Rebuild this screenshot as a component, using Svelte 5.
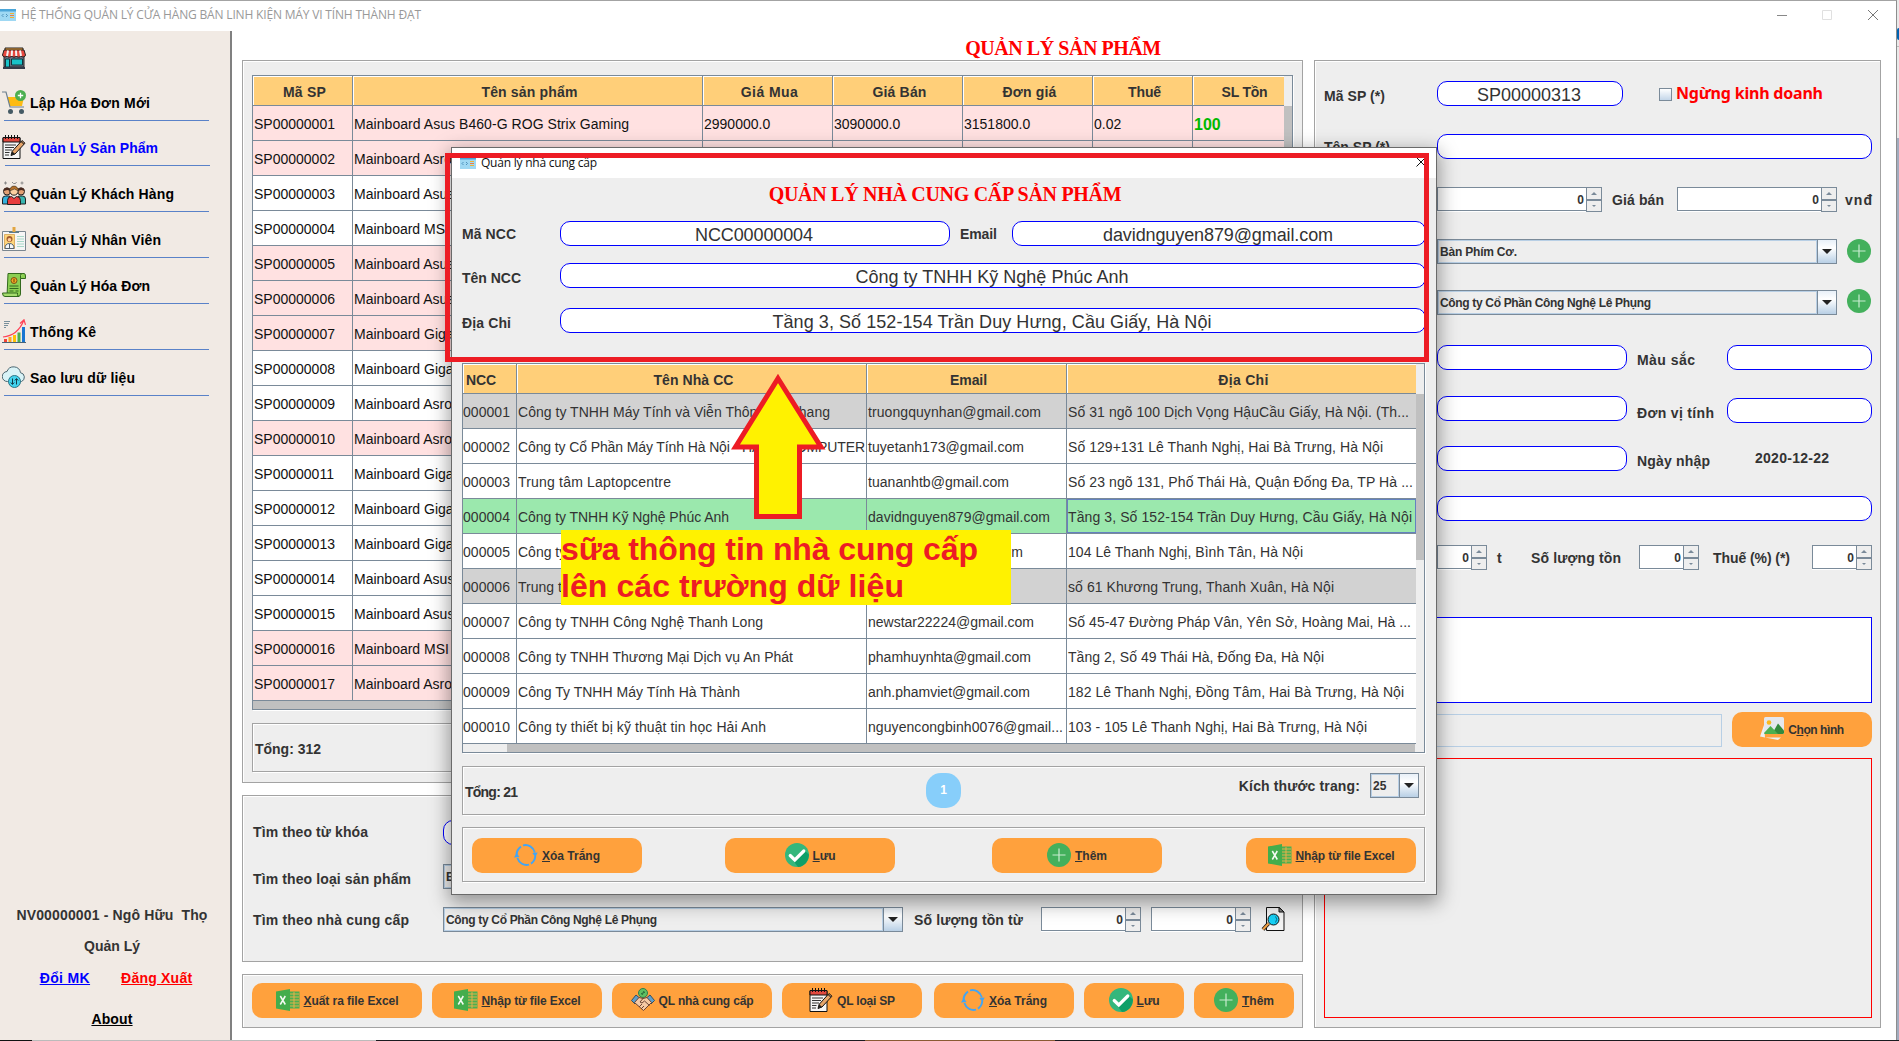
<script>
  // Adjusts letter spacing so that a label takes the given number of pixels.
  function fit(node, width) {
    if (!width) return;
    const count = [...node.textContent].length - 1;
    const natural = node.getBoundingClientRect().width;
    if (count > 0) node.style.letterSpacing = `${(width - natural) / count}px`;
  }

  const menu = [
    { icon: 'cart', text: 'Lập Hóa Đơn Mới', w: 120 },
    { icon: 'note', text: 'Quản Lý Sản Phẩm', w: 128, active: true },
    { icon: 'people', text: 'Quản Lý Khách Hàng', w: 144 },
    { icon: 'badge', text: 'Quản Lý Nhân Viên', w: 131 },
    { icon: 'bill', text: 'Quản Lý Hóa Đơn', w: 120 },
    { icon: 'chart', text: 'Thống Kê', w: 66 },
    { icon: 'cloud', text: 'Sao lưu dữ liệu', w: 105 }
  ];

  const productHeads = [
    ['Mã SP', 43], ['Tên sản phẩm', 96], ['Giá Mua', 57], ['Giá Bán', 54],
    ['Đơn giá', 54], ['Thuế', 33], ['SL Tồn', 46]
  ];
  const pink = [1, 2, 5, 6, 7, 10, 16, 17];
  const names = [
    'Mainboard Asus B460-G ROG Strix Gaming', 'Mainboard Asrock', 'Mainboard Asus', 'Mainboard MSI',
    'Mainboard Asus', 'Mainboard Asus', 'Mainboard Gigabyte', 'Mainboard Gigabyte', 'Mainboard Asrock',
    'Mainboard Asrock', 'Mainboard Gigabyte', 'Mainboard Gigabyte', 'Mainboard Gigabyte', 'Mainboard Asus',
    'Mainboard Asus', 'Mainboard MSI', 'Mainboard Asrock'
  ];
  const products = names.map((name, i) => ({
    id: 'SP' + String(i + 1).padStart(8, '0'),
    name,
    first: i === 0,
    pink: pink.includes(i + 1)
  }));

  const supplierHeads = [['NCC', 30], ['Tên Nhà CC', 80], ['Email', 37], ['Địa Chỉ', 50]];
  const suppliers = [
    { id: '000001', name: 'Công ty TNHH Máy Tính và Viễn Thông An Khang', nw: 312, mail: 'truongquynhan@gmail.com', mw: 173, addr: 'Số 31 ngõ 100 Dịch Vọng HậuCầu Giấy, Hà Nội. (Th...', aw: 341, tone: 'gray' },
    { id: '000002', name: 'Công ty Cổ Phần Máy Tính Hà Nội - HANOICOMPUTER', nw: 347, mail: 'tuyetanh173@gmail.com', mw: 156, addr: 'Số 129+131 Lê Thanh Nghị, Hai Bà Trưng, Hà Nội', aw: 315 },
    { id: '000003', name: 'Trung tâm Laptopcentre', nw: 153, mail: 'tuananhtb@gmail.com', mw: 141, addr: 'Số 23 ngõ 131, Phố Thái Hà, Quận Đống Đa, TP Hà ...', aw: 345 },
    { id: '000004', name: 'Công ty TNHH Kỹ Nghệ Phúc Anh', nw: 211, mail: 'davidnguyen879@gmail.com', mw: 182, addr: 'Tầng 3, Số 152-154 Trần Duy Hưng, Cầu Giấy, Hà Nội', aw: 344, tone: 'green' },
    { id: '000005', name: 'Công ty', nw: 0, mail: 'benhvientin@gmail.com', mw: 155, addr: '104 Lê Thanh Nghị, Bình Tân, Hà Nội', aw: 235 },
    { id: '000006', name: 'Trung tâm', nw: 0, mail: '', mw: 0, addr: 'số 61 Khương Trung, Thanh Xuân, Hà Nội', aw: 266, tone: 'gray' },
    { id: '000007', name: 'Công ty TNHH Công Nghệ Thanh Long', nw: 245, mail: 'newstar22224@gmail.com', mw: 166, addr: 'Số 45-47 Đường Pháp Vân, Yên Sở, Hoàng Mai, Hà ...', aw: 343 },
    { id: '000008', name: 'Công ty TNHH Thương Mại Dịch vụ An Phát', nw: 275, mail: 'phamhuynhta@gmail.com', mw: 163, addr: 'Tầng 2, Số 49 Thái Hà, Đống Đa, Hà Nội', aw: 256 },
    { id: '000009', name: 'Công Ty TNHH Máy Tính Hà Thành', nw: 222, mail: 'anh.phamviet@gmail.com', mw: 162, addr: '182 Lê Thanh Nghị, Đồng Tâm, Hai Bà Trưng, Hà Nội', aw: 336 },
    { id: '000010', name: 'Công ty thiết bị kỹ thuật tin học Hải Anh', nw: 248, mail: 'nguyencongbinh0076@gmail...', mw: 195, addr: '103 - 105 Lê Thanh Nghị, Hai Bà Trưng, Hà Nội', aw: 299 }
  ];
</script>

{#snippet icon(name)}
  <svg class="ico" viewBox="0 0 24 24" width="24" height="24">
    {#if name === 'store'}
      <path d="M3 2h18v4H3z" fill="#f5a33a" stroke="#222" />
      <path d="M2 10v11h20V10z" fill="#6b7284" stroke="#222" />
      <path d="M2 4h20l1.500 5a2.500 2 0 0 1-4.600 1 2.500 2 0 0 1-4.600 0 2.500 2 0 0 1-4.600 0 2.500 2 0 0 1-4.600 0A2.500 2 0 0 1 .5 9z" fill="#e8483f" stroke="#222" />
      <path d="M6 4.500L5 10M10 4.500L9.700 10M14 4.500l.3 5.500M18 4.500l1 5.500" stroke="#f3f3f3" stroke-width="2" />
      <path d="M3.500 13h4v8h-4zM9.500 13h11v6h-11z" fill="#18c3c9" stroke="#11343c" />
      <path d="M1 22h22" stroke="#333a48" stroke-width="2" />
    {:else if name === 'cart'}
      <path d="M5 7h17l-2 9H8z" fill="#fdbb13" />
      <path d="M0 2h4l4 15h14" fill="none" stroke="#6d7f8d" stroke-width="1.200" />
      <circle cx="8.500" cy="21.500" r="2.500" fill="#455a64" /><circle cx="19.500" cy="21.500" r="2.500" fill="#455a64" />
      <circle cx="18.500" cy="5.500" r="5.500" fill="#4caf50" />
      <path d="M18.500 2.800v5.400M15.800 5.500h5.400" stroke="#fff" stroke-width="1.300" />
    {:else if name === 'note'}
      <path d="M1 3h17v20.500H1z" fill="#f5f5f5" stroke="#111" />
      <path d="M1 2.500h17V7H1z" fill="#e0483f" stroke="#111" />
      <path d="M3.500 0v4M6.500 0v4M9.500 0v4M12.500 0v4M15.500 0v4" stroke="#111" />
      <path d="M3 10h11M3 12.500h9M3 15h7M3 17.500h4.500M3 20h4" stroke="#333" />
      <path d="M9 20.500l1.200-4.200L20 5.500l3 2.700-10 10.800z" fill="#e6a56a" stroke="#111" />
      <path d="M9 20.500l1.200-4.200 2.800 2.700z" fill="#222" /><path d="M19 6.500l3 2.800" stroke="#111" />
    {:else if name === 'people'}
      <path d="M2 2h3M3.500.5v3M18.500 2h3M20 .5v3M10 1l1.500 1.500h2L14.500 1" stroke="#888" fill="none" />
      <circle cx="5" cy="10.500" r="3.500" fill="#e5a073" stroke="#222" /><path d="M1.500 10a3.500 3.500 0 0 1 7 0l-3-1z" fill="#4b2a1e" />
      <circle cx="19" cy="10.500" r="3.500" fill="#e5a073" stroke="#222" /><path d="M15.500 10a3.500 3.500 0 0 1 7 0l-3-1z" fill="#4b2a1e" />
      <path d="M.5 23v-5q0-3 3-3h4v8z" fill="#35b0dc" stroke="#222" /><path d="M23.500 23v-5q0-3-3-3h-4v8z" fill="#39b6b0" stroke="#222" />
      <circle cx="12" cy="10" r="4.200" fill="#fbd0a0" stroke="#222" /><path d="M7.500 10a4.500 5 0 0 1 9 0l-4-2z" fill="#b4712b" stroke="#222" stroke-width=".5" />
      <path d="M5.500 23.500v-4q0-4 4-4l2.500 2 2.500-2q4 0 4 4v4z" fill="#e83d3d" stroke="#222" />
    {:else if name === 'badge'}
      <path d="M.5 4.500h23v19H.5z" fill="#f6f6f6" stroke="#7b8790" />
      <path d="M7 4h10v2H7z" fill="#607d8b" /><path d="M10.500 0h3v5h-3z" fill="#e2a642" />
      <path d="M2.500 7.500h10v14h-10z" fill="#ffd67c" stroke="#c98a2b" stroke-width=".6" />
      <circle cx="7.500" cy="12" r="3" fill="#a45d30" /><circle cx="7.500" cy="12.700" r="1.800" fill="#ffcf9d" />
      <path d="M3 21.500q0-5 4.500-5t4.500 5z" fill="#f4f7fa" stroke="#54616e" /><path d="M7.500 17v4" stroke="#54616e" />
      <path d="M15 9.500h7M15 12h7M15 14.500h7M15 17h7M15 19.500h7" stroke="#a8d8c8" />
    {:else if name === 'bill'}
      <path d="M6 .5h16q1.500 0 1.500 2.500v2.500h-5V21q0 2.500-2.500 2.500H5z" fill="#8bcf52" stroke="#33691e" />
      <path d="M.5 20h15v1.500q0 2 1.500 2H3q-2.500 0-2.500-3.500zM18.500 5.500V2.500Q18.500.5 20.500.5" fill="#a5dc6e" stroke="#33691e" />
      <circle cx="12" cy="7.500" r="3" fill="#f3a825" stroke="#7a5316" /><path d="M12 5.800v3.400" stroke="#6b3f00" />
      <path d="M7.500 13h9M7.500 15.500h9M7.500 18h4M13.500 18h3" stroke="#33691e" />
    {:else if name === 'chart'}
      <path d="M0 23.500h24" stroke="#4a6377" />
      <path d="M2 20h3v3H2z" fill="#f44336" /><path d="M6.500 18h3v5h-3z" fill="#ffa726" /><path d="M11 16h3v7h-3z" fill="#ffc107" />
      <path d="M15.500 13.500h3V23h-3z" fill="#4caf50" /><path d="M20 8h3v15h-3z" fill="#1976d2" />
      <path d="M1 18C12 17 18 11 22 1M18 4.500L22 .8l1.500 5" fill="none" stroke="#ff4054" stroke-width="1.200" />
      <path d="M2 2.500h6M2 4.500h5M2 6.500h4M2 8.500h2" stroke="#78909c" />
    {:else if name === 'cloud'}
      <path d="M5.500 16.500a5 5 0 0 1-.5-10 7 7 0 0 1 13.500 1.200 4.600 4.600 0 0 1 1 8.800z" fill="#d9f3f7" stroke="#4c6670" />
      <circle cx="12.500" cy="16.500" r="6" fill="#41d3ee" stroke="#2c7586" />
      <path d="M10.500 13.500v5.500M8.800 17.500l1.700 2 1.700-2M14.500 19.500V14M12.800 15.500l1.700-2 1.700 2" fill="none" stroke="#123c4a" />
    {:else if name === 'excel'}
      <path d="M13 3.500h10.500v17H13z" fill="#4caf50" />
      <path d="M14 6h9M14 9h9M14 12h9M14 15h9M14 18h9M18 4v16" stroke="#f0b04b" stroke-width=".9" />
      <path d="M0 3.500L14 1v22L0 20.500z" fill="#43ad4c" />
      <path d="M4.300 8l5 8.500M9.300 8l-5 8.500" stroke="#f4fbf4" stroke-width="1.500" />
    {:else if name === 'refresh'}
      <path d="M2.600 12.500A9.600 10 0 0 1 7 3.600M9 2.400A9.600 10 0 0 1 20.800 9.500M21.300 13A9.600 10 0 0 1 17 20.600M15 21.600A9.600 10 0 0 1 3.400 15" fill="none" stroke="#42a5f5" stroke-width="1.900" />
      <path d="M0 14.500l2.600-4.500L5.500 14zM18.300 10l5.400-.5-2.300 4.500z" fill="#42a5f5" />
    {:else if name === 'check'}
      <circle cx="12" cy="12" r="12" fill="#34b77c" />
      <path d="M20 8l3.900 3.500A12 12 0 0 1 13 24l-4.500-6z" fill="#0f9f68" />
      <path d="M5.200 12.500l4.600 4.500 9-9" fill="none" stroke="#fff" stroke-width="3.200" stroke-linecap="round" />
    {:else if name === 'plus'}
      <circle cx="12" cy="12" r="12" fill="#43b05c" />
      <path d="M12 5.500v13M5.500 12h13" stroke="#c8ecd0" stroke-width="1.200" />
    {:else if name === 'hands'}
      <circle cx="12" cy="5" r="4.500" fill="#5fbf62" stroke="#2e7d4f" /><path d="M10 5.500q2 2 2-.5t2-.5" stroke="#1c5a33" fill="none" />
      <path d="M.5 12.500L5 7l3.500 3-4.500 6z" fill="#5e9ecb" stroke="#37505e" /><path d="M23.500 12.500L19 7l-3.500 3 4.500 6z" fill="#5e9ecb" stroke="#37505e" />
      <path d="M3.500 14.500L8 9.500l4 1 4-1 4.500 5-8 8z" fill="#f6c9a4" stroke="#6d4433" />
      <path d="M12 10.500l-3 3.500 2 1 2.500-2 5 4.500M8 19l3-3M10 21l3-3" fill="none" stroke="#6d4433" />
    {:else if name === 'picture'}
      <path d="M4 8L0 19.500 18 23l3-2.500H5z" fill="#eceff1" />
      <rect x="4" y="0" width="20" height="17" rx="1.500" fill="#e4e7ee" />
      <circle cx="9" cy="5.500" r="2.300" fill="#fbb91c" />
      <path d="M12 17l6-10.500 6 7V15.500q0 1.500-1.500 1.500z" fill="#338a3e" /><path d="M4 16l6.500-7 7.500 8H5q-1 0-1-1z" fill="#4caf50" />
    {:else if name === 'search'}
      <path d="M5.500.500h13L23 5v18.500H5.500z" fill="#f3f3f3" stroke="#111" /><path d="M18 .5V5h5z" fill="#888" stroke="#111" />
      <path d="M2 22.500l5.500-6" stroke="#111" stroke-width="3.800" /><path d="M2 22.500l5.500-6" stroke="#f0a045" stroke-width="2.200" />
      <circle cx="12.500" cy="12.500" r="5.500" fill="#16d0f5" stroke="#111" /><path d="M14.500 9.500q2.500 2.500 0 6" fill="none" stroke="#0b6d8f" />
    {/if}
  </svg>
{/snippet}

{#snippet appIcon()}
  <svg class="app-ico" viewBox="0 0 16 12" width="16" height="12">
    <path d="M0 0h16v12H0z" fill="#9fd8f3" /><path d="M0 0h16v2.500H0z" fill="#4aa5d8" />
    <path d="M3.500 5L2 6.500 3.500 8M6 5l1.500 1.500L6 8" fill="none" stroke="#3c82ad" stroke-width=".8" />
    <path d="M10 4.500h4M10 8.500h4" stroke="#f2b233" /><path d="M10 6.500h4" stroke="#e98048" />
  </svg>
{/snippet}

{#snippet button(name, before, key, after, w, size)}
  <button class="btn {size}">
    {@render icon(name)}<span use:fit={w}>{before}<u>{key}</u>{after}</span>
  </button>
{/snippet}

{#snippet combo(text, w, size)}
  <div class="combo {size}">
    <div class="value"><span use:fit={w}>{text}</span></div>
    <div class="arrow"><i></i></div>
  </div>
{/snippet}

{#snippet spinner(size)}
  <div class="spinner {size}">
    <div class="num">0</div>
    <div class="steps"><span><i class="up"></i></span><span><i class="down"></i></span></div>
  </div>
{/snippet}

{#snippet label(text, w, cls)}
  <div class="label {cls}"><span use:fit={w}>{text}</span></div>
{/snippet}

{#snippet field(text, w, size)}
  <div class="field {size}"><span use:fit={w}>{text}</span></div>
{/snippet}

<div class="screen">
  <div class="window">
    <header class="titlebar">
      {@render appIcon()}
      <span class="title" use:fit={400}>HỆ THỐNG QUẢN LÝ CỬA HÀNG BÁN LINH KIỆN MÁY VI TÍNH THÀNH ĐẠT</span>
      <svg class="controls" viewBox="0 0 102 12" width="102" height="12">
        <path d="M0 6.500h10" stroke="#888" /><path d="M45.500 1.500h9v9h-9z" fill="none" stroke="#e0e0e0" />
        <path d="M91 1l10 10M101 1L91 11" stroke="#777" />
      </svg>
    </header>

    <div class="body">
      <nav class="sidebar">
        <div class="store">{@render icon('store')}</div>
        {#each menu as item}
          <div class="item" class:active={item.active}>
            {@render icon(item.icon)}<span use:fit={item.w}>{item.text}</span>
          </div>
        {/each}
        <footer class="user">
          <div><span use:fit={191}>NV00000001 - Ngô Hữu&nbsp; Thọ</span></div>
          <div class="role"><span use:fit={56}>Quản Lý</span></div>
          <div class="links"><a class="blue" href="#pw" use:fit={50}>Đổi MK</a><a class="red" href="#out" use:fit={71}>Đăng Xuất</a></div>
          <div class="about"><a href="#about" use:fit={41}>About</a></div>
        </footer>
      </nav>

      <main>
        <h1><span use:fit={196}>QUẢN LÝ SẢN PHẨM</span></h1>
        <div class="panels">
          <div class="left">
            <section class="group list">
              <div class="table products">
                <div class="grid">
                  <div class="tr head">
                    {#each productHeads as [text, w]}<div class="th"><span use:fit={w}>{text}</span></div>{/each}
                  </div>
                  {#each products as p}
                    <div class="tr" class:pink={p.pink}>
                      <div class="td">{p.id}</div>
                      <div class="td"><span use:fit={p.first ? 275 : 0}>{p.name}</span></div>
                      <div class="td">{p.first ? '2990000.0' : ''}</div>
                      <div class="td">{p.first ? '3090000.0' : ''}</div>
                      <div class="td">{p.first ? '3151800.0' : ''}</div>
                      <div class="td">{p.first ? '0.02' : ''}</div>
                      <div class="td stock">{p.first ? '100' : ''}</div>
                    </div>
                  {/each}
                </div>
                <div class="vbar"><i></i></div>
                <div class="hbar"><i></i></div>
              </div>
              <div class="group total"><span use:fit={66}>Tổng: 312</span></div>
            </section>

            <section class="group filters">
              <div class="line">{@render label('Tìm theo từ khóa', 115, 'f')}{@render field('', 0, 'w460')}</div>
              <div class="line">{@render label('Tìm theo loại sản phẩm', 158, 'f d3')}{@render combo('Bàn Phím Cơ.', 77, 'w460')}</div>
              <div class="line">
                {@render label('Tìm theo nhà cung cấp', 156, 'f d1')}{@render combo('Công ty Cổ Phần Công Nghệ Lê Phụng', 211, 'w460')}
                {@render label('Số lượng tồn từ', 109, 'stockfrom d1')}{@render spinner('w100')}{@render spinner('w100 gap10')}
                <div class="find">{@render icon('search')}</div>
              </div>
            </section>

            <section class="group actions">
              {@render button('excel', '', 'X', 'uất ra file Excel', 95, 'b170')}
              {@render button('excel', '', 'N', 'hập từ file Excel', 99, 'b170')}
              {@render button('hands', 'QL nhà cung cấp', '', '', 95, 'b160')}
              {@render button('note', 'QL loại SP', '', '', 58, 'b140')}
              {@render button('refresh', '', 'X', 'óa Trắng', 58, 'b140 shift')}
              {@render button('check', '', 'L', 'ưu', 23, 'b100')}
              {@render button('plus', '', 'T', 'hêm', 32, 'b100')}
            </section>
          </div>

          <section class="group detail">
            <div class="line">
              {@render label('Mã SP (*)', 61, 'c d3')}{@render field('SP00000313', 104, 'w186')}
              <div class="check"><i></i><span use:fit={147}>Ngừng kinh doanh</span></div>
            </div>
            <div class="line">{@render label('Tên SP (*)', 66, 'c d1')}{@render field('', 0, 'w435')}</div>
            <div class="line">
              {@render label('Giá mua', 0, 'c d1')}{@render spinner('w165')}{@render label('Giá bán', 52, 'sale d1')}{@render spinner('w160')}
              {@render label('vnđ', 27, 'unit d1')}
            </div>
            <div class="line">{@render label('', 0, 'c')}{@render combo('Bàn Phím Cơ.', 77, 'w400')}<div class="add">{@render icon('plus')}</div></div>
            <div class="line">{@render label('', 0, 'c')}{@render combo('Công ty Cổ Phần Công Nghệ Lê Phụng', 211, 'w400')}<div class="add up1">{@render icon('plus')}</div></div>
            <div class="line">{@render label('', 0, 'c')}{@render field('', 0, 'w190')}{@render label('Màu sắc', 58, 'mid d3')}{@render field('', 0, 'w145')}</div>
            <div class="line">{@render label('', 0, 'c')}{@render field('', 0, 'w190')}{@render label('Đơn vị tính', 77, 'mid d5')}{@render field('', 0, 'w145 low')}</div>
            <div class="line">{@render label('', 0, 'c')}{@render field('', 0, 'w190')}{@render label('Ngày nhập', 73, 'mid d3')}{@render label('2020-12-22', 74, 'date')}</div>
            <div class="line">{@render label('', 0, 'c')}{@render field('', 0, 'w435')}</div>
            <div class="line">
              {@render label('', 0, 'c')}{@render spinner('w50')}{@render label('t', 0, 't d1')}{@render label('Số lượng tồn', 90, 'qty d1')}
              {@render spinner('w60')}{@render label('Thuế (%) (*)', 77, 'tax d1')}{@render spinner('w60')}
            </div>
            <div class="memo"></div>
            <div class="file"><div class="path"></div>{@render button('picture', 'C', 'h', 'ọn hình', 56, 'b140')}</div>
            <div class="preview"></div>
          </section>
        </div>
      </main>
    </div>
  </div>
  <div class="behind"><i></i><b></b></div>
  <div class="taskbar"></div>

  <div class="dialog">
    <header>
      {@render appIcon()}<span use:fit={116}>Quản lý nhà cung cấp</span>
      <svg class="close" viewBox="0 0 10 10" width="10" height="10"><path d="M.5.5l9 9M9.500.5l-9 9" stroke="#111" /></svg>
    </header>
    <h2><span use:fit={353}>QUẢN LÝ NHÀ CUNG CẤP SẢN PHẨM</span></h2>
    <div class="form">
      <div class="line">
        {@render label('Mã NCC', 54, 's d1')}{@render field('NCC00000004', 118, 'w390')}
        {@render label('Email', 37, 'mail d1')}{@render field('davidnguyen879@gmail.com', 230, 'w414')}
      </div>
      <div class="line">{@render label('Tên NCC', 59, 's d3')}{@render field('Công ty TNHH Kỹ Nghệ Phúc Anh', 273, 'w866')}</div>
      <div class="line">{@render label('Địa Chỉ', 49, 's d3')}{@render field('Tầng 3, Số 152-154 Trần Duy Hưng, Cầu Giấy, Hà Nội', 439, 'w866')}</div>
    </div>

    <div class="table suppliers">
      <div class="grid">
        <div class="tr head">
          {#each supplierHeads as [text, w]}<div class="th"><span use:fit={w}>{text}</span></div>{/each}
        </div>
        {#each suppliers as s}
          <div class="tr {s.tone ?? ''}">
            <div class="td"><span use:fit={47}>{s.id}</span></div>
            <div class="td"><span use:fit={s.nw}>{s.name}</span></div>
            <div class="td"><span use:fit={s.mw}>{s.mail}</span></div>
            <div class="td" class:focus={s.tone === 'green'}><span use:fit={s.aw}>{s.addr}</span></div>
          </div>
        {/each}
      </div>
      <div class="vbar"><i></i></div>
      <div class="hbar"><i></i></div>
    </div>

    <div class="group pager">
      <span class="sum" use:fit={53}>Tổng: 21</span>
      <div class="page">1</div>
      <div class="size">{@render label('Kích thước trang:', 121, 'd1')}{@render combo('25', 0, 'w49')}</div>
    </div>
    <div class="group foot">
      {@render button('refresh', '', 'X', 'óa Trắng', 58, 'b170')}
      {@render button('check', '', 'L', 'ưu', 23, 'b170')}
      {@render button('plus', '', 'T', 'hêm', 32, 'b170')}
      {@render button('excel', '', 'N', 'hập từ file Excel', 99, 'b170')}
    </div>
  </div>

  <div class="marker"></div>
  <svg class="pointer" viewBox="0 0 100 150" width="100" height="150">
    <path d="M48 8.500L91 77H69.500V146.500H26.500V77H5.500z" fill="#fff200" stroke="#ed1c24" stroke-width="5" />
  </svg>
  <div class="caption"><span use:fit={417}>sữa thông tin nhà cung cấp</span><br /><span use:fit={343}>lên các trường dữ liệu</span></div>
</div>

<style>
  :global(body) { margin: 0; overflow: hidden; background: #fff; }
  .screen, .screen * { box-sizing: border-box; }
  .screen {
    position: relative; width: 1899px; height: 1041px; overflow: hidden;
    font: 14px 'Liberation Sans', Arial, sans-serif; color: #333; white-space: nowrap;
    display: grid; grid-template: 1040px 1px / 1897px 2px;
  }
  span, a { display: inline-block; }
  svg { display: block; flex: none; }
  i { display: block; }

  .window { display: flex; flex-direction: column; border-top: 1px solid #a3a3a3; border-right: 1px solid #8d8d8d; background: #fff; }
  .titlebar { height: 30px; display: flex; align-items: center; padding-bottom: 2px; font: 12px 'Open Sans', 'Noto Sans', sans-serif; color: #999; }
  .titlebar .title { margin: -1px 0 0 5px; }
  .app-ico { align-self: flex-start; margin-top: 8px; }
  .controls { margin: -1px 17px 0 auto; }
  .behind { background: linear-gradient(#e9e9e9 138px, #a2acbf 138px); padding-top: 28px; }
  .behind i { height: 12px; background: #0063b1; border-radius: 2px 0 0 2px; }
  .behind b { display: block; height: 1px; margin-top: 6px; background: #bbb; }
  .taskbar { grid-column: 1 / 3; background: linear-gradient(90deg, #111 32px, #bbb 32px 376px, #1b1b20 376px 865px, #8a5a33 865px 1055px, #1b1b20 1055px); }
  .body { flex: 1; display: flex; }

  .sidebar { width: 232px; background: #f1eae4; border-right: 2px solid #808080; display: flex; flex-direction: column; font-weight: bold; color: #000; }
  .store { height: 44px; padding: 15px 0 0 2px; }
  .item {
    height: 46px; padding: 0 0 7px 2px; display: flex; align-items: flex-end; gap: 4px; position: relative;
    background: linear-gradient(#5a82c8, #5a82c8) 4px 45px / 205px 1px no-repeat;
  }
  .item span { line-height: 16px; margin-bottom: 3px; }
  .item:nth-child(3) { height: 45px; background-position: 5px 44px; }
  .item.active { color: #00f; }
  .user { margin-top: auto; height: 133px; text-align: center; color: #333; padding-right: 6px; line-height: 16px; }
  .role { margin-top: 15px; }
  .links { margin: 16px 0 0 8px; display: flex; justify-content: center; gap: 31px; }
  .about { margin-top: 25px; }
  .about a { color: #000; }
  .blue { color: #00f; }
  .red { color: #f00; }

  main { flex: 1; padding-left: 10px; }
  h1 { margin: 0; height: 29px; text-align: center; color: #f00; font: bold 20px/34px 'Liberation Serif', serif; padding-right: 12px; }
  .panels { display: flex; gap: 11px; }
  .left { width: 1061px; }
  .group { border: 1px solid #a3a3a3; background: #eee; box-shadow: 1px 1px 0 #fff, inset 1px 1px 0 #fff; }
  .list { height: 723px; padding: 14px 9px; }
  .total { margin-top: 13px; height: 49px; width: 1041px; padding-left: 2px; font-weight: bold; line-height: 51px; }
  .filters { margin-top: 12px; height: 167px; padding: 24px 10px; }
  .filters .line + .line { margin-top: 19px; }
  .filters .line:last-child { margin-top: 18px; }
  .actions { margin-top: 12px; height: 54px; display: flex; gap: 10px; padding: 8px 9px; }

  .table { border: 1px solid #7a8a99; display: grid; background: #eee; box-shadow: 1px 1px 0 #fff; }
  .products { width: 1041px; height: 635px; grid-template: 625px 8px / 1031px 8px; }
  .suppliers { width: 963px; height: 390px; grid-template: 380px 8px / 953px 8px; margin: 30px 0 0 10px; }
  .grid { overflow: hidden; }
  .tr { display: grid; height: 35px; background: #fff; }
  .products .tr { grid-template-columns: 100px 350px 130px 130px 130px 100px 100px; width: 1040px; color: #111; }
  .suppliers .tr { grid-template-columns: 54px 350px 200px 350px; width: 954px; }
  .tr.head { height: 30px; }
  .th {
    background: #ffcf79; border-right: 1px solid #7a8a99; border-bottom: 1px solid #7a8a99; box-shadow: inset 1px 1px 0 #fff;
    text-align: center; font-weight: bold; line-height: 33px; color: #333; overflow: hidden; padding-left: 4px;
  }
  .suppliers .th:first-child { text-align: left; padding-left: 3px; }
  .td { border-right: 1px solid #7a8a99; border-bottom: 1px solid #7a8a99; padding-left: 1px; line-height: 37px; overflow: hidden; }
  .suppliers .td:first-child { padding-left: 0; }
  .tr.pink { background: #ffe1e1; }
  .tr.gray { background: #d2d2d2; }
  .tr.green { background: #9be8ad; }
  .td.focus { box-shadow: inset 1px 1px 0 #6382bf, inset -1px -1px 0 #6382bf; }
  .stock { font-weight: bold; font-size: 16px; color: #00b800; }
  .vbar { padding-top: 30px; }
  .vbar i { height: 595px; background: #c0c0c0; }
  .hbar i { height: 8px; width: 900px; background: #c0c0c0; }
  .suppliers .vbar i { height: 166px; }
  .suppliers .hbar i { margin-left: 44px; width: 908px; }

  .line { display: flex; height: 25px; }
  .label { font-weight: bold; line-height: 25px; flex: none; }
  .d1 { padding-top: 1px; } .d3 { padding-top: 3px; } .d5 { padding-top: 5px; }
  .label.f { width: 190px; } .label.c { width: 113px; } .label.s { width: 98px; }
  .stockfrom { width: 138px; padding-left: 11px; }
  .sale { width: 75px; padding-left: 10px; } .unit { padding-left: 8px; }
  .mid { width: 100px; padding-left: 10px; } .date { padding-left: 28px; }
  .t { width: 44px; padding-left: 10px; } .qty { width: 108px; } .tax { width: 113px; padding-left: 14px; }
  .mail { width: 62px; padding-left: 10px; }

  .field { flex: none; height: 25px; border: 1px solid #00f; border-radius: 10px; background: #fff; text-align: center; font-size: 18px; line-height: 26px; padding-right: 2px; }
  .low { margin-top: 2px; }
  .w49 { width: 49px; } .w50 { width: 50px; } .w60 { width: 60px; } .w100 { width: 100px; } .w145 { width: 145px; }
  .w160 { width: 160px; } .w165 { width: 165px; } .w186 { width: 186px; } .w190 { width: 190px; } .w390 { width: 390px; }
  .w400 { width: 400px; } .w414 { width: 414px; } .w435 { width: 435px; } .w460 { width: 460px; } .w866 { width: 866px; }
  .gap10 { margin-left: 10px; }

  .combo { flex: none; height: 25px; display: flex; border: 1px solid #7a8a99; font-weight: bold; font-size: 12px; }
  .combo .value { flex: 1; box-shadow: inset 0 0 0 1px #b8cfe5; padding-left: 2px; line-height: 24px; }
  .arrow { width: 19px; border-left: 1px solid #7a8a99; background: linear-gradient(#e8f0f8, #fff 35%, #b8cfe5); display: flex; align-items: center; justify-content: center; }
  .arrow i { border: 5px solid transparent; border-top-color: #222; border-bottom: 0; }

  .spinner { flex: none; height: 25px; display: flex; font-weight: bold; font-size: 12px; }
  .num { flex: 1; height: 24px; background: #fff; border: 1px solid #7a8a99; border-right: 0; box-shadow: 0 1px 0 #fff; text-align: right; padding-right: 2px; line-height: 24px; }
  .steps { width: 16px; border: 1px solid #7a8a99; display: flex; flex-direction: column; }
  .steps span { flex: 1; display: flex; align-items: center; justify-content: center; }
  .steps span:first-child { border-bottom: 2px solid #7a8a99; }
  .up { border: 3px solid transparent; border-bottom-color: #7a8a99; border-top: 0; }
  .down { border: 2px solid transparent; border-top-color: #7a8a99; border-bottom: 0; }
  .find { margin: 0 0 0 10px; }

  .btn {
    flex: none; height: 35px; border: 0; border-radius: 10px; background: #ffa13d; padding: 0 0 1px; color: #333;
    display: flex; align-items: center; justify-content: center; gap: 4px; font: bold 12px 'Liberation Sans', Arial, sans-serif; white-space: nowrap;
  }
  .btn span { margin-top: 2px; }
  .b100 { width: 100px; } .b140 { width: 140px; } .b160 { width: 160px; } .b170 { width: 170px; }
  .shift { margin-left: 2px; }

  .detail { width: 567px; height: 968px; padding: 20px 8px 0 9px; }
  .detail .line:nth-child(2), .detail .line:nth-child(3) { margin-top: 28px; }
  .detail .line:nth-child(4) { margin-top: 27px; }
  .detail .line:nth-child(5), .detail .line:nth-child(7) { margin-top: 26px; }
  .detail .line:nth-child(6) { margin-top: 30px; }
  .detail .line:nth-child(8), .detail .line:nth-child(9) { margin-top: 25px; }
  .detail .line:nth-child(10) { margin-top: 24px; }
  .check { display: flex; align-items: center; gap: 4px; margin-left: 36px; color: #f00; font: bold 16px/27px 'Noto Sans', sans-serif; }
  .check i { width: 13px; height: 13px; margin-top: 2px; border: 1px solid #7a8a99; background: linear-gradient(#fff, #c3d6e9); }
  .add { margin-left: 10px; } .up1 { margin-top: -1px; }
  .memo { margin: 47px 0 0 20px; height: 86px; border: 1px solid #00f; background: #fff; }
  .file { display: flex; gap: 10px; margin: 9px 0 0 20px; }
  .path { flex: 1; height: 33px; margin-top: 2px; border: 1px solid #b8cfe5; }
  .preview { margin-top: 11px; height: 260px; border: 1px solid #f00; }

  .dialog {
    position: absolute; left: 451px; top: 147px; width: 986px; height: 748px; border: 1px solid #6a6a6a; background: #eee;
    box-shadow: 0 6px 18px 2px rgba(0, 0, 0, .38); display: flex; flex-direction: column;
  }
  .dialog header { height: 30px; background: #fff; display: flex; align-items: flex-start; padding-left: 8px; font: 12px/16px 'Open Sans', 'Noto Sans', sans-serif; color: #111; }
  .dialog header span { margin: 7px 0 0 5px; }
  .dialog header .app-ico { margin-top: 9px; }
  .close { margin: 9px 10px 0 auto; }
  h2 { margin: 0; height: 43px; text-align: center; color: #f00; font: bold 20px/33px 'Liberation Serif', serif; padding-left: 2px; }
  .form { padding-left: 10px; }
  .form .line:nth-child(2) { margin-top: 17px; }
  .form .line:nth-child(3) { margin-top: 20px; }
  .pager { margin: 13px 0 0 10px; width: 963px; height: 49px; display: grid; grid-template-columns: 461px 1fr auto; padding: 6px 5px 0 2px; font-weight: bold; }
  .sum { line-height: 36px; padding-top: 1px; justify-self: start; }
  .page { width: 35px; height: 35px; border-radius: 15px; background: #87cefa; color: #fff; font-size: 12px; line-height: 35px; text-align: center; }
  .size { display: flex; gap: 10px; }
  .foot { margin: 12px 0 0 10px; width: 963px; height: 55px; display: grid; grid-template-columns: 253px 267px 254px 170px; padding: 10px 0 0 9px; }

  .marker { position: absolute; left: 445px; top: 153px; width: 984px; height: 209px; border: 5px solid #ed1c24; }
  .pointer { position: absolute; left: 730px; top: 370px; }
  .caption { position: absolute; left: 561px; top: 530px; width: 450px; height: 75px; padding-top: 1px; background: #fff200; color: #ed1c24; font-weight: bold; font-size: 32px; line-height: 37px; }
</style>
